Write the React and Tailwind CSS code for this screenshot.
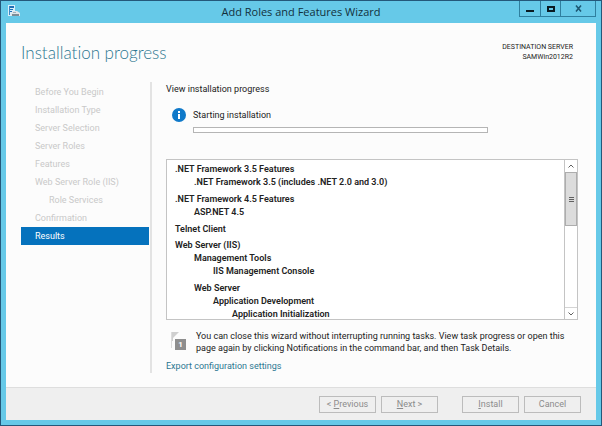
import React from 'react';

const steps = [
  { label: 'Before You Begin' },
  { label: 'Installation Type' },
  { label: 'Server Selection' },
  { label: 'Server Roles' },
  { label: 'Features' },
  { label: 'Web Server Role (IIS)' },
  { label: 'Role Services', nested: true },
  { label: 'Confirmation' },
  { label: 'Results', active: true },
];

const features = [
  {
    label: '.NET Framework 3.5 Features',
    children: [{ label: '.NET Framework 3.5 (includes .NET 2.0 and 3.0)' }],
  },
  { label: '.NET Framework 4.5 Features', children: [{ label: 'ASP.NET 4.5' }] },
  { label: 'Telnet Client' },
  {
    label: 'Web Server (IIS)',
    children: [
      { label: 'Management Tools', children: [{ label: 'IIS Management Console' }] },
      {
        label: 'Web Server',
        children: [
          { label: 'Application Development', children: [{ label: 'Application Initialization' }] },
        ],
      },
    ],
  },
];

const ServerIcon = () => (
  <svg width="13" height="12" viewBox="0 0 13 12" aria-hidden="true">
    <rect x="0" y="0" width="7" height="11" fill="#d9effa" />
    <path d="M1 1h5v2H1zM1 4h4v1H1zM1 6h3v1H1z" fill="#1f6fb5" />
    <path d="M1 1h1v9H1z" fill="#3c86c4" />
    <path d="M3 8l2-2h4l3 2v3H3z" fill="#dfe6ea" />
    <path d="M4 9h7v2H4z" fill="#7d8d96" />
    <path d="M5 7h3v1H5z" fill="#9db0ba" />
  </svg>
);

const InfoIcon = () => (
  <svg width="14" height="14" viewBox="0 0 14 14" aria-hidden="true">
    <circle cx="7" cy="7" r="7" fill="#0f79c9" />
    <rect x="6" y="3" width="2" height="2" fill="#fff" />
    <rect x="6" y="6" width="2" height="5" fill="#fff" />
  </svg>
);

const FlagIcon = () => (
  <div className="relative h-5 w-4 shrink-0">
    <svg width="16" height="21" viewBox="0 0 16 21" aria-hidden="true">
      <path d="M1 2h8L5 6 3 8v3H1z" fill="#cfcfcf" />
      <path d="M1.5 2v16" stroke="#dcdcdc" />
      <rect x="5" y="9" width="11" height="11" fill="#8e8e8e" />
    </svg>
    <span className="absolute top-[9px] left-[5px] w-[11px] text-center text-[8px] leading-[11px] font-bold text-white">
      1
    </span>
  </div>
);

const FeatureList = ({ items, root = false }) => (
  <ul className={root ? 'flex flex-col gap-[3px]' : 'flex flex-col gap-1 pl-[19px]'}>
    {items.map((item) => (
      <li key={item.label} className={root && item.children ? 'pb-px' : undefined}>
        <div className="whitespace-nowrap">{item.label}</div>
        {item.children && <FeatureList items={item.children} />}
      </li>
    ))}
  </ul>
);

const ScrollBar = () => (
  <div className="flex w-[13px] shrink-0 flex-col border-l border-[#c4c4c4] bg-white">
    <button type="button" aria-label="Scroll up" className="flex h-3 items-center justify-center">
      <svg width="6" height="4" viewBox="0 0 6 4" fill="none" stroke="#606060">
        <path d="M.5 3.5L3 1l2.5 2.5" />
      </svg>
    </button>
    <div className="flex h-[54px] flex-col items-center justify-center gap-px border border-[#adadad] bg-[#dcdcdc]">
      <div className="h-px w-[5px] bg-[#606060]" />
      <div className="h-px w-[5px] bg-[#606060]" />
      <div className="h-px w-[5px] bg-[#606060]" />
    </div>
    <div className="flex-1" />
    <button
      type="button"
      aria-label="Scroll down"
      className="flex h-3 items-center justify-center border-t border-[#d4d4d4]"
    >
      <svg width="6" height="4" viewBox="0 0 6 4" fill="none" stroke="#606060">
        <path d="M.5 .5L3 3 5.5 .5" />
      </svg>
    </button>
  </div>
);

const FooterButton = ({ children }) => (
  <button
    type="button"
    disabled
    className="h-[17px] w-[57px] border border-[#bcbcbc] bg-[#efefef] text-[9px] leading-[15px] text-[#8c8c8c]"
  >
    {children}
  </button>
);

const TitleBar = () => (
  <header className="grid h-[22px] grid-cols-[1fr_auto_1fr] items-start">
    <div className="pt-1 pl-0.5">
      <ServerIcon />
    </div>
    <h1 className="font-['Open_Sans',sans-serif] text-[11px] leading-[22px] text-[#12303c]">
      Add Roles and Features Wizard
    </h1>
    <div className="flex h-4 justify-end">
      <div className="flex divide-x divide-[#2f7f9f] border-x border-b border-[#2f7f9f]">
        <button type="button" aria-label="Minimize" className="flex w-[21px] items-center justify-center">
          <svg width="8" height="10" viewBox="0 0 8 10">
            <path d="M0 6h8v2H0z" fill="#0a1a22" />
          </svg>
        </button>
        <button type="button" aria-label="Maximize" className="flex w-5 items-center justify-center">
          <svg width="8" height="6" viewBox="0 0 8 6">
            <path d="M1 1h6v4H1z" fill="none" stroke="#0a1a22" strokeWidth="2" />
          </svg>
        </button>
        <button type="button" aria-label="Close" className="flex w-[34px] items-center justify-center">
          <svg width="7" height="7" viewBox="0 0 7 7">
            <path d="M1 .5l5 6M6 .5l-5 6" stroke="#1d5873" strokeWidth="1.6" />
          </svg>
        </button>
      </div>
    </div>
  </header>
);

export default function App() {
  return (
    <div className="flex min-h-screen flex-col border border-[#24587a] bg-[#66c9e8] px-[5px] pb-[5px] font-['Roboto','Open_Sans',sans-serif] text-[9px] leading-[13px] text-[#222]">
      <TitleBar />
      <div className="flex flex-1 flex-col bg-[#fcfcfc]">
        <div className="flex items-start justify-between pt-4 pr-[23px] pl-[15px]">
          <h2 className="font-['Lato',sans-serif] text-[17px] leading-7 font-light text-[#2c7791] [font-variant-ligatures:none]">
            Installation progress
          </h2>
          <div className="pt-[3px] text-right text-[7px] leading-[10px]">
            <p>DESTINATION SERVER</p>
            <p>SAMWin2012R2</p>
          </div>
        </div>

        <div className="flex flex-1 pt-[15px] pr-[18px] pb-3.5 pl-[15px]">
          <nav className="w-[131px] shrink-0 border-r-2 border-[#e3e3e3] pr-px">
            <ol className="pt-px">
              {steps.map((step) => (
                <li
                  key={step.label}
                  aria-current={step.active ? 'step' : undefined}
                  className={
                    step.active
                      ? 'bg-[#0572bd] pl-3.5 leading-[18px] text-white'
                      : step.nested
                        ? 'pl-7 leading-[18px] text-[#c9c9c9]'
                        : 'pl-3.5 leading-[18px] text-[#c9c9c9]'
                  }
                >
                  {step.label}
                </li>
              ))}
            </ol>
          </nav>

          <main className="min-w-0 flex-1 pl-3.5">
            <p className="leading-[14px]">View installation progress</p>
            <div className="flex gap-[7px] pt-3 pl-1.5">
              <InfoIcon />
              <div className="flex-1 pr-[90px]">
                <p id="status" className="leading-[14px]">
                  Starting installation
                </p>
                <div
                  role="progressbar"
                  aria-labelledby="status"
                  aria-valuenow={0}
                  className="mt-[5px] h-1.5 border border-[#b5b5b5] bg-white"
                />
              </div>
            </div>

            <div className="mt-[26px] flex h-[161px] border border-[#c4c4c4] bg-white">
              <div className="min-w-0 flex-1 overflow-hidden pt-[3px] pl-2 font-semibold">
                <FeatureList items={features} root />
              </div>
              <ScrollBar />
            </div>

            <div className="flex gap-2.5 pt-2.5 pl-1">
              <FlagIcon />
              <p className="leading-3">
                You can close this wizard without interrupting running tasks. View task progress or open this page
                again by clicking Notifications in the command bar, and then Task Details.
              </p>
            </div>
            <a href="#export" className="mt-1.5 block text-[#2c7791]">
              Export configuration settings
            </a>
          </main>
        </div>

        <footer className="flex h-[33px] items-center justify-end gap-6 border-t border-[#dedede] bg-[#efefef] pr-[15px]">
          <div className="flex gap-[5px]">
            <FooterButton>
              &lt; <u>P</u>revious
            </FooterButton>
            <FooterButton>
              <u>N</u>ext &gt;
            </FooterButton>
          </div>
          <div className="flex gap-[5px]">
            <FooterButton>
              <u>I</u>nstall
            </FooterButton>
            <FooterButton>Cancel</FooterButton>
          </div>
        </footer>
      </div>
    </div>
  );
}
